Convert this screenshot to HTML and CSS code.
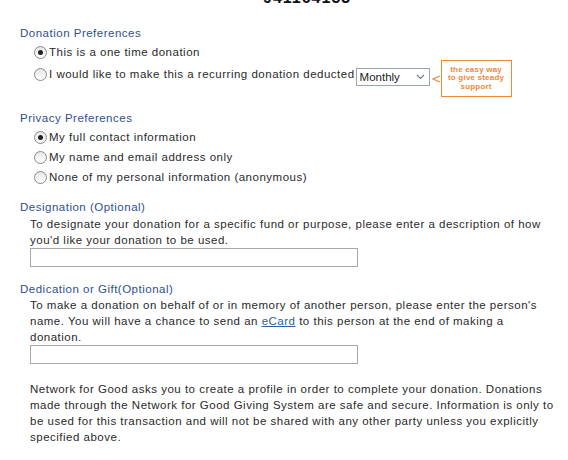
FILE: index.html
```html
<!DOCTYPE html>
<html>
<head>
<meta charset="utf-8">
<link rel="stylesheet" href="styles.css">
</head>
<body>
<div class="page">
  <div class="ein">941164153</div>

  <div class="section s1">
    <div class="title">Donation Preferences</div>
    <div class="opt"><span class="radio on"></span><span>This is a one time donation</span></div>
    <div class="opt opt-rec"><span class="radio"></span><span>I would like to make this a recurring donation deducted</span>
      <span class="selwrap">
        <span class="select">Monthly<svg class="chev" width="9" height="6" viewBox="0 0 9 6"><polyline points="1,1 4.5,4.5 8,1" fill="none" stroke="#7a7a7a" stroke-width="1.1"/></svg></span>
        <span class="callout"><svg class="arrow" width="9" height="10" viewBox="0 0 9 10"><polyline points="8,2 1,5 8,8" fill="none" stroke="#f0883a" stroke-width="1.2"/></svg>the easy way<br>to give steady<br>support</span>
      </span>
    </div>
  </div>

  <div class="section s2">
    <div class="title">Privacy Preferences</div>
    <div class="opt"><span class="radio on"></span><span>My full contact information</span></div>
    <div class="opt"><span class="radio"></span><span>My name and email address only</span></div>
    <div class="opt"><span class="radio"></span><span>None of my personal information (anonymous)</span></div>
  </div>

  <div class="section s3">
    <div class="title">Designation (Optional)</div>
    <p class="desc">To designate your donation for a specific fund or purpose, please enter a description of how you'd like your donation to be used.</p>
    <div class="field"></div>
  </div>

  <div class="section s4">
    <div class="title">Dedication or Gift(Optional)</div>
    <p class="desc">To make a donation on behalf of or in memory of another person, please enter the person's name. You will have a chance to send an <a href="#">eCard</a> to this person at the end of making a donation.</p>
    <div class="field"></div>
  </div>

  <p class="note">Network for Good asks you to create a profile in order to complete your donation. Donations made through the Network for Good Giving System are safe and secure. Information is only to be used for this transaction and will not be shared with any other party unless you explicitly specified above.</p>
</div>
</body>
</html>
```
FILE: styles.css
```css
html, body { margin: 0; padding: 0; background: #fff; }
body {
  font-family: "Liberation Sans", Arial, sans-serif;
  font-size: 11.5px;
  letter-spacing: 0.5px;
  color: #2a2a2a;
  overflow: hidden;
}
.page { width: 568px; height: 460px; overflow: hidden; }
.ein {
  margin-top: -9px;
  height: 14px;
  line-height: 14px;
  padding-left: 263px;
  font-size: 16px;
  letter-spacing: 1px;
  font-weight: bold;
  color: #111;
}
.section { padding-left: 20px; }
.title {
  color: #2d4f8f;
  line-height: 16px;
  height: 16px;
  margin-bottom: 1px;
}
.s1 { margin-top: 20px; }
.opt {
  display: flex;
  align-items: center;
  height: 20px;
  padding-left: 14px;
}
.opt-rec { height: 24px; }
.radio {
  width: 11px;
  height: 11px;
  border: 1px solid #8a8a8a;
  border-radius: 50%;
  background: linear-gradient(#e6e6e6, #fff);
  box-sizing: content-box;
  margin-right: 2px;
  position: relative;
  flex: none;
}
.radio.on::after {
  content: "";
  position: absolute;
  left: 3px;
  top: 3px;
  width: 5px;
  height: 5px;
  border-radius: 50%;
  background: #222;
}
.selwrap { position: relative; display: inline-flex; margin-left: 1px; }
.select {
  display: inline-flex;
  align-items: center;
  justify-content: space-between;
  width: 74px;
  height: 18px;
  border: 1px solid #9aa4b4;
  padding: 0 4px 0 3px;
  box-sizing: border-box;
  margin-top: 5px;
  color: #222;
  letter-spacing: 0;
}
.chev { margin-top: 1px; }
.callout {
  position: absolute;
  left: 85px;
  top: -3px;
  width: 71px;
  height: 37px;
  border: 1px solid #f0883a;
  color: #f0883a;
  font-size: 8px;
  letter-spacing: 0.2px;
  font-weight: bold;
  line-height: 8.5px;
  text-align: center;
  padding-top: 5px;
  box-sizing: border-box;
}
.arrow {
  position: absolute;
  left: -10px;
  top: 13px;
}
.s2 { margin-top: 24px; }
.s3 { margin-top: 12px; }
.s4 { margin-top: 14px; }
.desc {
  margin: 0 0 0 10px;
  line-height: 16px;
  width: 527px;
}
.s4 .desc { margin-top: -1px; }
.field {
  margin: 0 0 0 10px;
  width: 328px;
  height: 19px;
  box-sizing: border-box;
  border: 1px solid #a8a8a8;
}
a { color: #2a5db0; }
.note {
  margin: 17px 0 0 30px;
  width: 527px;
  line-height: 16px;
}
```
